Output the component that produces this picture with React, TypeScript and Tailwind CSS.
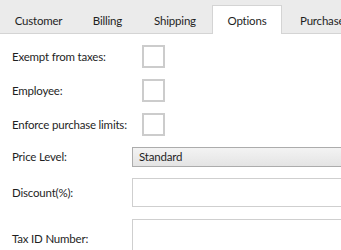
const tabs = [
  { label: "Customer", w: "w-[77px] justify-center" },
  { label: "Billing", w: "w-[61px] justify-center" },
  { label: "Shipping", w: "w-[74px] justify-center" },
  { label: "Options", w: "w-[70px] justify-center" },
  { label: "Purchase History", w: "w-[110px] pl-[17px]" },
];

function Tab({ label, w, active }: { label: string; w: string; active?: boolean }) {
  return (
    <div
      className={
        active
          ? `flex h-[29px] shrink-0 items-center border border-b-0 border-[#d4d4d4] bg-white pt-[1px] -mb-px ${w}`
          : `flex h-[29px] shrink-0 items-center border border-b-0 border-transparent pt-[1px] -mb-px ${w}`
      }
    >
      {label}
    </div>
  );
}

function CheckRow({ label, first }: { label: string; first?: boolean }) {
  return (
    <div className={first ? "flex h-[23px] items-center" : "mt-[11px] flex h-[23px] items-center"}>
      <div className="w-[130px] whitespace-nowrap">{label}</div>
      <div className="h-[23px] w-[23px] border-2 border-[#cccccc] bg-white" />
    </div>
  );
}

export default function App() {
  return (
    <div className="h-[250px] w-[341px] overflow-hidden bg-white font-['Lato',sans-serif] text-[11.5px] tracking-[-0.2px] text-[#1f1f1f]">
      <div className="w-[460px]">
        {/* Tab strip */}
        <div className="flex h-[34px] items-end border-b border-[#d4d4d4] bg-[#ebebeb] whitespace-nowrap">
          {tabs.map((t) => (
            <Tab key={t.label} label={t.label} w={t.w} active={t.label === "Options"} />
          ))}
        </div>

        {/* Options form */}
        <div className="flex flex-col pl-[12px] pt-[11px]">
          <CheckRow label="Exempt from taxes:" first />
          <CheckRow label="Employee:" />
          <CheckRow label="Enforce purchase limits:" />

          <div className="mt-[11px] flex h-[20px] items-center">
            <div className="w-[120px]">Price Level:</div>
            <div className="flex h-[20px] flex-1 items-center border border-[#acacac] bg-gradient-to-b from-[#f3f3f3] to-[#e4e4e4] px-[6px]">
              Standard
            </div>
          </div>

          <div className="mt-[11px] flex h-[29px] items-center">
            <div className="w-[120px]">Discount(%):</div>
            <div className="h-[29px] flex-1 border border-[#cfcfcf] bg-white" />
          </div>

          <div className="mt-[11px] flex h-[40px] items-center pt-[2px]">
            <div className="w-[120px]">Tax ID Number:</div>
            <div className="h-[40px] flex-1 border border-[#cfcfcf] bg-white" />
          </div>
        </div>
      </div>
    </div>
  );
}
